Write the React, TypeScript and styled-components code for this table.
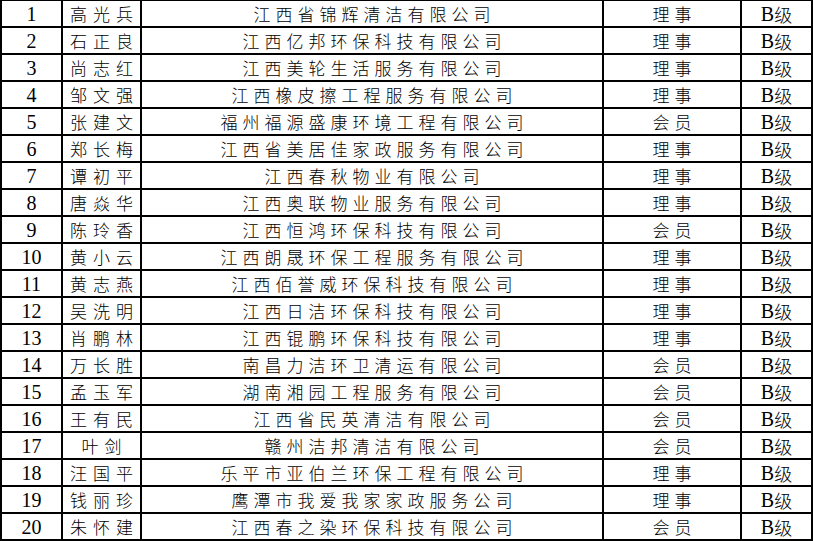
import React from "react";
import styled, { createGlobalStyle } from "styled-components";

const Global = createGlobalStyle`
  html, body { margin: 0; padding: 0; background: #fff; }
  body { overflow: hidden; }
`;

const Sheet = styled.div`
  display: grid;
  grid-template-columns: 59px 77px 460px 136px 69px;
  grid-auto-rows: 25px;
  gap: 2px;
  padding: 1px 2px 2px 2px;
  background: #000;
  width: 813px;
  box-sizing: border-box;
`;

const Cell = styled.div<{ $spacing?: number; $serif?: boolean }>`
  background: #fff;
  display: flex;
  align-items: center;
  justify-content: center;
  color: #000;
  white-space: nowrap;
  font-family: ${(p) =>
    p.$serif
      ? `"Liberation Serif", "Noto Sans CJK SC", serif`
      : `"Noto Sans CJK SC", "Liberation Serif", sans-serif`};
  font-weight: ${(p) => (p.$serif ? 400 : 300)};
  font-size: ${(p) => (p.$serif ? "20px" : "17px")};
  letter-spacing: ${(p) => (p.$spacing ? `${p.$spacing}px` : "0")};
  padding-left: ${(p) => (p.$spacing ? `${p.$spacing}px` : "0")};
  line-height: 1;
`;

const Level = styled.span`
  font-family: "Liberation Serif", serif;
  font-size: 20px;
`;

const LevelCn = styled.span`
  font-family: "Noto Sans CJK SC", sans-serif;
  font-weight: 300;
  font-size: 18px;
`;

type Row = [string, string, string];

const rows: Row[] = [
  ["高光兵", "江西省锦辉清洁有限公司", "理事"],
  ["石正良", "江西亿邦环保科技有限公司", "理事"],
  ["尚志红", "江西美轮生活服务有限公司", "理事"],
  ["邹文强", "江西橡皮擦工程服务有限公司", "理事"],
  ["张建文", "福州福源盛康环境工程有限公司", "会员"],
  ["郑长梅", "江西省美居佳家政服务有限公司", "理事"],
  ["谭初平", "江西春秋物业有限公司", "理事"],
  ["唐焱华", "江西奥联物业服务有限公司", "理事"],
  ["陈玲香", "江西恒鸿环保科技有限公司", "会员"],
  ["黄小云", "江西朗晟环保工程服务有限公司", "理事"],
  ["黄志燕", "江西佰誉威环保科技有限公司", "理事"],
  ["吴洗明", "江西日洁环保科技有限公司", "理事"],
  ["肖鹏林", "江西锟鹏环保科技有限公司", "理事"],
  ["万长胜", "南昌力洁环卫清运有限公司", "会员"],
  ["孟玉军", "湖南湘园工程服务有限公司", "会员"],
  ["王有民", "江西省民英清洁有限公司", "会员"],
  ["叶剑", "赣州洁邦清洁有限公司", "会员"],
  ["汪国平", "乐平市亚伯兰环保工程有限公司", "理事"],
  ["钱丽珍", "鹰潭市我爱我家家政服务公司", "理事"],
  ["朱怀建", "江西春之染环保科技有限公司", "会员"],
];

export default function App() {
  return (
    <>
      <Global />
      <Sheet>
        {rows.map(([name, company, role], i) => (
          <React.Fragment key={i}>
            <Cell $serif>{i + 1}</Cell>
            <Cell $spacing={6}>{name}</Cell>
            <Cell $spacing={5}>{company}</Cell>
            <Cell $spacing={5}>{role}</Cell>
            <Cell>
              <Level>B</Level>
              <LevelCn>级</LevelCn>
            </Cell>
          </React.Fragment>
        ))}
      </Sheet>
    </>
  );
}
